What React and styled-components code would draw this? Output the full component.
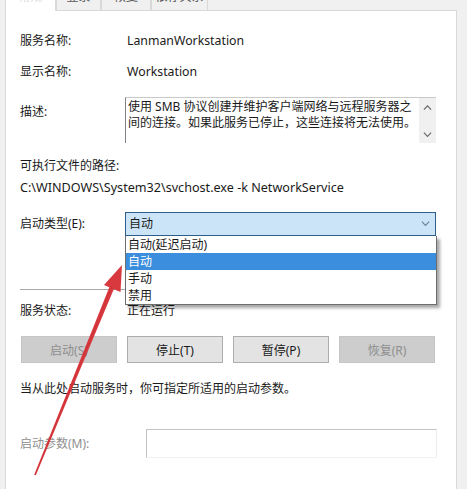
import React from 'react';
import styled, { createGlobalStyle } from 'styled-components';

const Global = createGlobalStyle`
	html, body {
		margin: 0;
		padding: 0;
		background: #f0f0f0;
	}
`;

const Page = styled.div`
	position: relative;
	width: 467px;
	height: 489px;
	background: #f0f0f0;
	overflow: hidden;
	font-family: 'Noto Sans', 'Noto Sans CJK SC', sans-serif;
	font-size: 12px;
	color: #1a1a1a;
`;

const TabStrip = styled.div`
	display: flex;
	align-items: flex-end;
	height: 10px;
	padding-left: 5px;
`;

const Tab = styled.div`
	width: ${({ w }) => w}px;
	height: ${({ active }) => (active ? 11 : 10)}px;
	margin-bottom: ${({ active }) => (active ? -1 : 0)}px;
	background: ${({ active }) => (active ? '#fff' : '#f0f0f0')};
	border: 1px solid #d9d9d9;
	border-top: none;
	border-bottom: none;
	box-sizing: border-box;
	overflow: hidden;
	text-align: center;
	position: relative;
	z-index: 1;
`;

const TabLabel = styled.span`
	display: block;
	margin-top: -10px;
	line-height: 14px;
	color: ${({ active }) => (active ? '#ddd' : '#555')};
`;

const Panel = styled.div`
	margin-left: 5px;
	width: 452px;
	height: 479px;
	box-sizing: border-box;
	background: #fff;
	border: 1px solid #d9d9d9;
	border-bottom: none;
	padding: 21px 0 0 14px;
`;

const Form = styled.div`
	display: flex;
	flex-direction: column;
	width: 417px;
`;

const Row = styled.div`
	display: grid;
	grid-template-columns: ${({ labelW }) => labelW || 105}px 1fr;
	align-items: ${({ top }) => (top ? 'start' : 'center')};
	margin-top: ${({ mt }) => mt || 0}px;
	line-height: 18px;
`;

const Label = styled.div`
	color: ${({ disabled }) => (disabled ? '#8f8f8f' : '#1a1a1a')};
	padding-top: ${({ pt }) => pt || 0}px;
	white-space: nowrap;
`;

const Value = styled.div`
	padding-left: 2px;
	white-space: nowrap;
	font-size: ${({ latin }) => (latin ? 12.3 : 12)}px;
`;

const Line = styled.div`
	margin-top: ${({ mt }) => mt || 0}px;
	line-height: 18px;
	white-space: nowrap;
	font-size: ${({ latin }) => (latin ? 12.6 : 12)}px;
`;

const DescBox = styled.div`
	display: flex;
	width: 311px;
	height: 46px;
	box-sizing: border-box;
	border-top: 1px solid #c9c9c9;
	border-left: 1px solid #7f848b;
`;

const DescText = styled.div`
	flex: 1;
	padding: 1px 3px 0 2px;
	line-height: 16px;
	white-space: nowrap;
`;

const ScrollBar = styled.div`
	width: 18px;
	background: #f0f0f0;
	display: flex;
	flex-direction: column;
	justify-content: space-between;
	align-items: center;
	padding: 7px 0 6px;
	box-sizing: border-box;
`;

const SelectWrap = styled.div`
	position: relative;
	width: 311px;
`;

const Select = styled.div`
	height: 24px;
	box-sizing: border-box;
	background: #cce4f7;
	border: 1px solid #2f5e8c;
	display: flex;
	align-items: center;
	justify-content: space-between;
	padding: 0 5px 0 3px;
`;

const DropList = styled.div`
	position: absolute;
	top: 100%;
	left: 0;
	width: 312px;
	box-sizing: border-box;
	background: #fff;
	border: 1px solid #6e6e6e;
	border-top: none;
	box-shadow: 3px 3px 3px rgba(0, 0, 0, 0.35);
	z-index: 2;
`;

const DropItem = styled.div`
	height: 17px;
	line-height: 17px;
	padding-left: 2px;
	background: ${({ selected }) => (selected ? '#3b8ddd' : '#fff')};
	color: ${({ selected }) => (selected ? '#fff' : '#1a1a1a')};
`;

const Separator = styled.div`
	margin-top: 53px;
	height: 1px;
	width: 416px;
	background: #a8a8a8;
`;

const ButtonRow = styled.div`
	display: flex;
	justify-content: space-between;
	width: 414px;
	margin: 16px 0 0 1px;
`;

const Button = styled.div`
	width: 96px;
	height: 27px;
	box-sizing: border-box;
	display: flex;
	align-items: center;
	justify-content: center;
	background: ${({ disabled }) => (disabled ? '#cdcdcd' : '#e3e3e3')};
	border: 1px solid ${({ disabled }) => (disabled ? '#c6c6c6' : '#adadad')};
	color: ${({ disabled }) => (disabled ? '#8e8e8e' : '#1a1a1a')};
`;

const ParamInput = styled.div`
	width: 291px;
	height: 29px;
	box-sizing: border-box;
	border-top: 1px solid #c4c4c4;
	border-left: 1px solid #c4c4c4;
	border-right: 1px solid #ececec;
	border-bottom: 1px solid #f2f2f2;
`;

const Overlay = styled.svg`
	position: absolute;
	left: 0;
	top: 0;
	pointer-events: none;
	z-index: 5;
`;

const Chevron = ({ up, color = '#555', size = 9 }) => (
	<svg width={size} height={size * 0.6} viewBox="0 0 10 6">
		<path
			d={up ? 'M1 5.2 L5 1 L9 5.2' : 'M1 0.8 L5 5 L9 0.8'}
			fill="none"
			stroke={color}
			strokeWidth="1.2"
		/>
	</svg>
);

const tabs = [
	{ name: '常规', w: 51, active: true },
	{ name: '登录', w: 45 },
	{ name: '恢复', w: 50 },
	{ name: '依存关系', w: 57 },
];

const startTypes = ['自动(延迟启动)', '自动', '手动', '禁用'];

const buttons = [
	{ name: '启动(S)', disabled: true },
	{ name: '停止(T)' },
	{ name: '暂停(P)' },
	{ name: '恢复(R)', disabled: true },
];

const App = () => {
	return (
		<Page>
			<Global />
			<TabStrip>
				{tabs.map((t) => (
					<Tab key={t.name} w={t.w} active={t.active}>
						<TabLabel active={t.active}>{t.name}</TabLabel>
					</Tab>
				))}
			</TabStrip>
			<Panel>
				<Form>
					<Row>
						<Label>服务名称:</Label>
						<Value latin>LanmanWorkstation</Value>
					</Row>
					<Row mt={13}>
						<Label>显示名称:</Label>
						<Value latin>Workstation</Value>
					</Row>
					<Row mt={16} top>
						<Label pt={6}>描述:</Label>
						<DescBox>
							<DescText>
								使用 SMB 协议创建并维护客户端网络与远程服务器之
								<br />
								间的连接。如果此服务已停止，这些连接将无法使用。
							</DescText>
							<ScrollBar>
								<Chevron up color="#666" />
								<Chevron color="#666" />
							</ScrollBar>
						</DescBox>
					</Row>
					<Line mt={14}>可执行文件的路径:</Line>
					<Line mt={4} latin>
						C:\WINDOWS\System32\svchost.exe -k NetworkService
					</Line>
					<Row mt={15}>
						<Label>启动类型(E):</Label>
						<SelectWrap>
							<Select>
								<span>自动</span>
								<Chevron color="#6a7f93" />
							</Select>
							<DropList>
								{startTypes.map((s) => (
									<DropItem key={s} selected={s === '自动'}>
										{s}
									</DropItem>
								))}
							</DropList>
						</SelectWrap>
					</Row>
					<Separator />
					<Row mt={12}>
						<Label>服务状态:</Label>
						<Value>正在运行</Value>
					</Row>
					<ButtonRow>
						{buttons.map((b) => (
							<Button key={b.name} disabled={b.disabled}>
								{b.name}
							</Button>
						))}
					</ButtonRow>
					<Line mt={17}>当从此处启动服务时，你可指定所适用的启动参数。</Line>
					<Row mt={31} labelW={126}>
						<Label disabled>启动参数(M):</Label>
						<ParamInput />
					</Row>
				</Form>
			</Panel>
			<Overlay width="467" height="489" viewBox="0 0 467 489">
				<polygon
					points="34.2,474.8 35.8,475.2 114.5,287.5 110,285.5"
					fill="#d8393e"
				/>
				<polygon points="122,265 104,285 120.5,292" fill="#d8393e" />
				<polyline
					points="35,475 112,286.5"
					fill="none"
					stroke="#b8282e"
					strokeWidth="0.6"
					opacity="0.6"
				/>
			</Overlay>
		</Page>
	);
};

export default App;
